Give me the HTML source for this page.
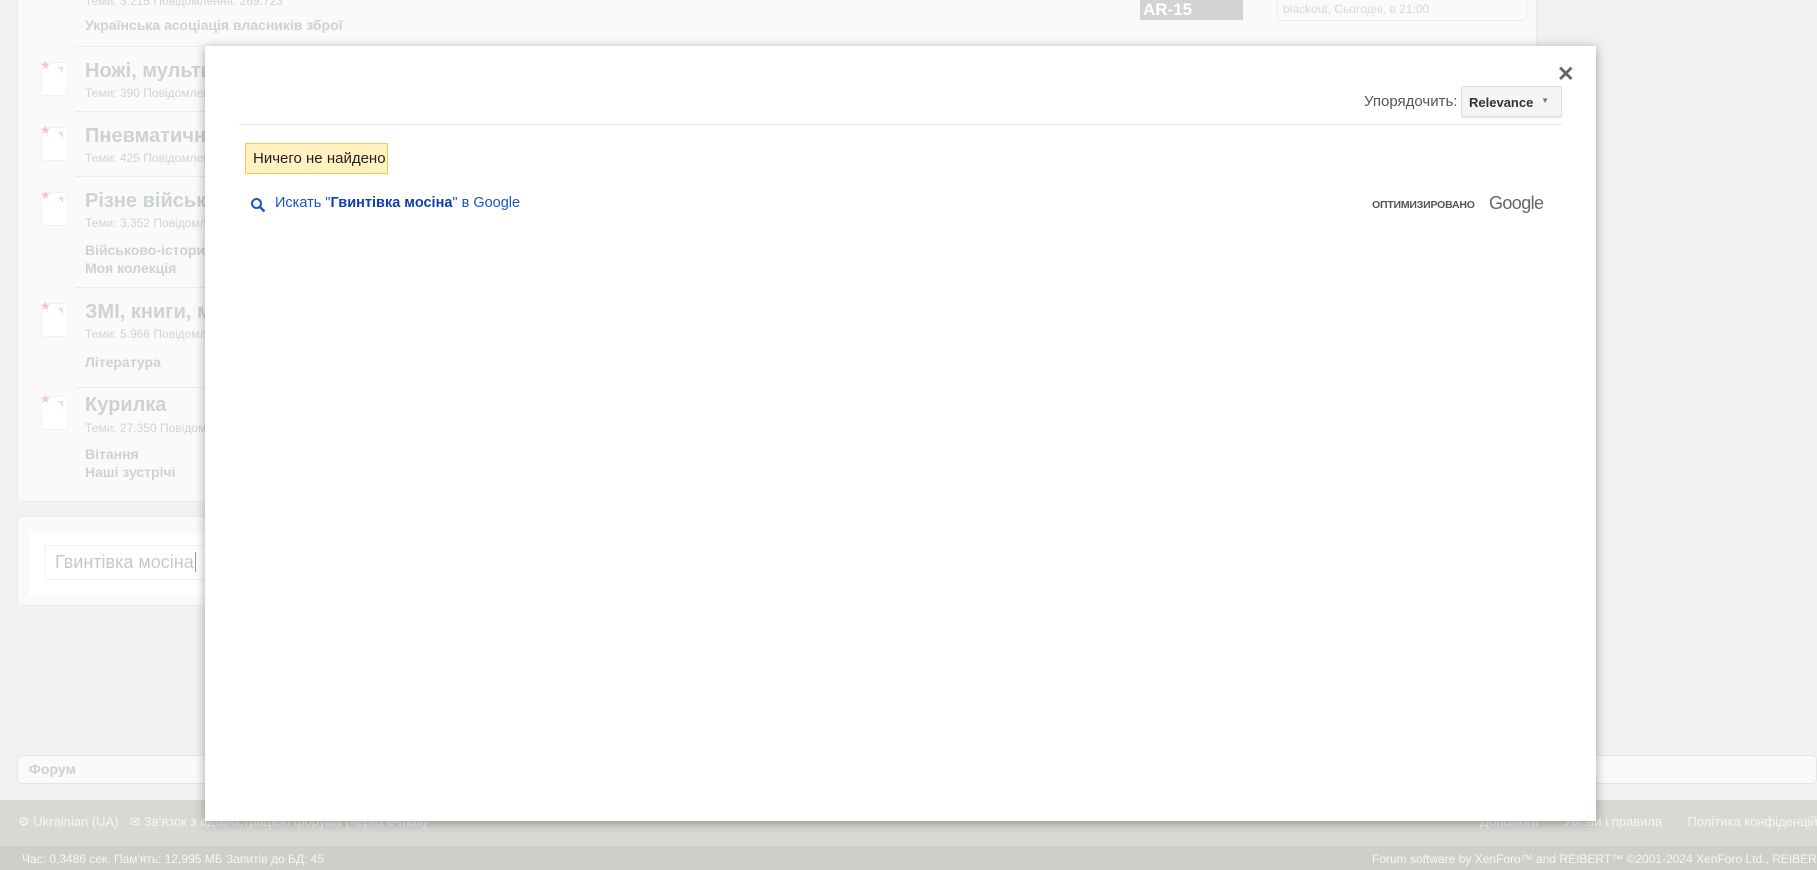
<!DOCTYPE html>
<html><head><meta charset="utf-8"><style>
*{margin:0;padding:0;box-sizing:border-box}
body{width:1817px;height:870px;overflow:hidden;background:#f1f1f1;font-family:"Liberation Sans",sans-serif;position:relative}
.a{position:absolute;white-space:nowrap}
.panel{position:absolute;left:17px;top:0;width:1520px;height:502px;background:#fafafa;border:1px solid #ebebeb;border-top:none;border-radius:0 0 5px 5px}
.div{position:absolute;left:75px;width:1460px;height:1px;background:#ececec}
.t{position:absolute;left:85px;font-size:20px;font-weight:bold;color:#cdd3cd;font-family:"Liberation Sans",sans-serif}
.s{position:absolute;left:85px;font-size:12px;color:#d3d3d3}
.l{position:absolute;left:85px;font-size:14px;font-weight:bold;color:#cdd3cd}
.ic{position:absolute;left:41px;width:27px;height:34px;background:#fff;border:1px solid #f2f2f2;border-radius:3px}
.ic:before{content:"★";position:absolute;left:-2px;top:-5px;color:#f0c6c6;font-size:12px}
.ic:after{content:"";position:absolute;right:4px;top:4px;border-left:5px solid transparent;border-top:6px solid #f5dada}
.modal{position:absolute;left:205px;top:46px;width:1391px;height:775px;background:#fff;box-shadow:0 2px 10px rgba(0,0,0,.35)}
</style></head><body>
<div class="panel"></div>
<div class="s" style="top:-6px">Теми: 3.215 Повідомлення: 269.723</div>
<div class="l" style="top:17px">Українська асоціація власників зброї</div>
<div class="a" style="left:1140px;top:0;width:103px;height:20px;background:#d3d3d3;color:#fff;font-weight:bold;font-size:17px;padding-left:3px">AR-15</div>
<div class="a" style="left:1277px;top:0;width:250px;height:21px;border:1px solid #ececec;border-top:none;border-radius:0 0 4px 4px;font-size:12px;color:#d8d8d8;padding:2px 5px">blackout, Сьогодні, в 21:00</div>
<div class="div" style="top:46px"></div>
<div class="ic" style="top:62px"></div><div class="t" style="top:60px">Ножі, мультитули</div><div class="s" style="top:86px">Теми: 390 Повідомлення</div>
<div class="div" style="top:111px"></div>
<div class="ic" style="top:127px"></div><div class="t" style="top:125px">Пневматична зброя</div><div class="s" style="top:151px">Теми: 425 Повідомлення</div>
<div class="div" style="top:176px"></div>
<div class="ic" style="top:192px"></div><div class="t" style="top:190px">Різне військове</div><div class="s" style="top:216px">Теми: 3.352 Повідомлення</div>
<div class="l" style="top:242px">Військово-історичне</div><div class="l" style="top:260px">Моя колекція</div>
<div class="div" style="top:287px"></div>
<div class="ic" style="top:303px"></div><div class="t" style="top:301px">ЗМІ, книги, музика</div><div class="s" style="top:327px">Теми: 5.966 Повідомлення</div>
<div class="l" style="top:354px">Література</div>
<div class="div" style="top:387px"></div>
<div class="ic" style="top:396px"></div><div class="t" style="top:394px">Курилка</div><div class="s" style="top:421px">Теми: 27.350 Повідомлення</div>
<div class="l" style="top:446px">Вітання</div><div class="l" style="top:464px">Наші зустрічі</div>
<div class="a" style="left:17px;top:516px;width:1520px;height:90px;background:#fafafa;border:1px solid #ebebeb;border-radius:5px"></div>
<div class="a" style="left:29px;top:533px;width:500px;height:63px;background:#fff"></div>
<div class="a" style="left:44px;top:545px;width:400px;height:35px;border:1px solid #f2f2f2;font-size:18px;color:#c8c8c8;padding:6px 10px">Гвинтівка мосіна<span style="border-left:1px solid #999;margin-left:1px"></span></div>
<div class="a" style="left:17px;top:755px;width:1800px;height:29px;background:#fafafa;border:1px solid #e5e5e5;border-radius:5px;font-size:14px;font-weight:bold;color:#ccd2cc;padding:5px 11px">Форум</div>
<div class="a" style="left:0;top:800px;width:1817px;height:46px;background:#d6d9d4"></div>
<div class="a" style="left:0;top:846px;width:1817px;height:24px;background:#cdd0ca"></div>
<div class="a" style="left:18px;top:814px;font-size:13px;color:#f4f7f2">⚙ Ukrainian (UA) &nbsp; ✉ Зв'язок з адміністрацією форума (через e-mail)</div>
<div class="a" style="left:1480px;top:814px;font-size:13px;color:#f4f7f2">Допомога &nbsp; &nbsp; &nbsp; Умови і правила &nbsp; &nbsp; &nbsp; Політика конфіденційності</div>
<div class="a" style="left:22px;top:852px;font-size:12px;color:#f4f7f2">Час: 0,3486 сек. Пам'ять: 12,995 МБ Запитів до БД: 45</div>
<div class="a" style="left:1372px;top:852px;font-size:12px;color:#f4f7f2">Forum software by XenForo™ and REIBERT™ ©2001-2024 XenForo Ltd., REIBERT</div>

<div class="modal">
<div class="a" style="left:1352px;top:16px;font-size:21px;font-weight:bold;color:#666">✕</div>
<div class="a" style="left:1159px;top:47px;font-size:15px;color:#555">Упорядочить:</div>
<div class="a" style="left:1256px;top:40px;width:101px;height:31px;background:#f5f5f5;border:1px solid #ddd;border-radius:2px;box-shadow:0 1px 1px rgba(0,0,0,.1);font-size:13px;font-weight:bold;color:#333;padding:8px 7px">Relevance<span style="position:absolute;right:12px;top:9px;font-size:8px;color:#777">▼</span></div>
<div class="a" style="left:34px;top:78px;width:1323px;height:1px;background:#e6e6e6"></div>
<div class="a" style="left:40px;top:97px;width:143px;height:31px;background:#fff2c0;border:1px solid #f7cc4a;font-size:15px;color:#222;padding:6px 7px">Ничего не найдено</div>
<svg class="a" style="left:45px;top:151px" width="16" height="16" viewBox="0 0 16 16"><circle cx="6.5" cy="6.5" r="4.5" fill="none" stroke="#1a55c8" stroke-width="2"/><path d="M10 10l4.5 4.5" stroke="#1a55c8" stroke-width="2.4"/></svg>
<div class="a" style="left:70px;top:149px;font-size:14.5px;color:#1a55c8">Искать "<b style="color:#1040b0">Гвинтівка мосіна</b>" в Google</div>
<div class="a" style="left:1167px;top:153px;font-size:10.5px;font-weight:bold;color:#555;letter-spacing:-0.2px">ОПТИМИЗИРОВАНО</div>
<div class="a" style="left:1284px;top:147px;font-size:18px;color:#666;letter-spacing:-0.6px">Google</div>
</div>
</body></html>
